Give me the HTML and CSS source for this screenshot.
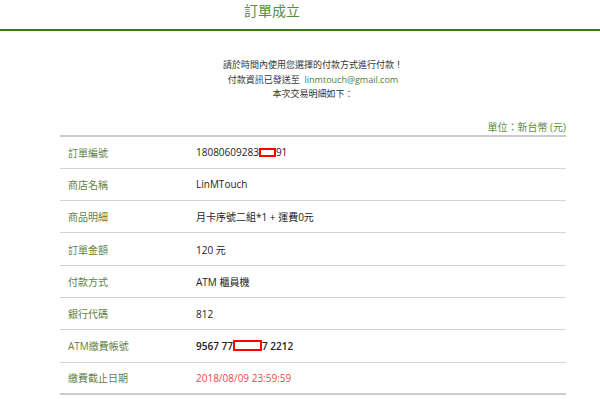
FILE: index.html
```html
<!DOCTYPE html>
<html lang="zh-Hant">

<head>
    <meta charset="UTF-8">
    <meta name="viewport" content="width=device-width, initial-scale=1.0">
    <title>訂單成立</title>
    <link rel="stylesheet" href="styles.css">
</head>

<body>
    <div class="header">
        <h1>訂單成立</h1>
    </div>
    <div class="content">
        <div class="notice">
            <p>請於時間內使用您選擇的付款方式進行付款！</p>
            <p>付款資訊已發送至&nbsp;&nbsp;<span class="mail">linmtouch@gmail.com</span></p>
            <p>本次交易明細如下：</p>
        </div>
        <div class="unit">單位：新台幣 (元)</div>
        <div class="detail">
            <div class="row">
                <div class="label">訂單編號</div>
                <div class="value">18080609283<span class="mask mask-small"></span>91</div>
            </div>
            <div class="row">
                <div class="label">商店名稱</div>
                <div class="value">LinMTouch</div>
            </div>
            <div class="row">
                <div class="label">商品明細</div>
                <div class="value">月卡序號二組*1 + 運費0元</div>
            </div>
            <div class="row">
                <div class="label">訂單金額</div>
                <div class="value">120 元</div>
            </div>
            <div class="row">
                <div class="label">付款方式</div>
                <div class="value">ATM 櫃員機</div>
            </div>
            <div class="row">
                <div class="label">銀行代碼</div>
                <div class="value">812</div>
            </div>
            <div class="row">
                <div class="label">ATM繳費帳號</div>
                <div class="value account">9567 77<span class="mask mask-wide"></span>7 2212</div>
            </div>
            <div class="row last">
                <div class="label">繳費截止日期</div>
                <div class="value deadline">2018/08/09 23:59:59</div>
            </div>
        </div>
    </div>
</body>

</html>
```

FILE: styles.css
```css
body {
    margin: 0;
    background-color: #fff;
    font-family: "Open Sans", "Noto Sans CJK TC", sans-serif;
    color: #222;
}

.header {
    height: 29px;
    border-bottom: 2px solid #3a7a14;
}

.header h1 {
    margin: 0;
    padding: 2px 56px 0 0;
    font-size: 14px;
    font-weight: normal;
    line-height: 17px;
    text-align: center;
    color: #5d8b3e;
}

.content {
    width: 506px;
    margin-left: 60px;
}

.notice {
    padding-top: 27px;
    text-align: center;
    font-size: 9px;
    color: #333;
}

.notice p {
    margin: 0;
    line-height: 14.5px;
}

.mail {
    color: #4f7d3a;
}

.unit {
    margin-top: 18px;
    text-align: right;
    font-size: 10px;
    line-height: 14px;
    color: #5d8b3e;
}

.detail {
    margin-top: 1px;
    border-top: 2px solid #ccc;
}

.row {
    display: flex;
    align-items: center;
    box-sizing: border-box;
    height: 32.3px;
    border-bottom: 1px solid #d4d4d4;
    font-size: 10px;
}

.row.last {
    border-bottom: 2px solid #ccc;
}

.label {
    width: 128px;
    padding-left: 8px;
    color: #5f7f45;
}

.value {
    display: flex;
    align-items: center;
    color: #222;
}

.account {
    font-weight: 600;
}

.deadline {
    color: #ee4a4a;
}

.mask {
    display: inline-block;
    box-sizing: border-box;
    border: 2px solid #f00;
    background-color: #fff;
}

.mask-small {
    width: 17px;
    height: 9px;
}

.mask-wide {
    width: 29px;
    height: 11px;
}
```
